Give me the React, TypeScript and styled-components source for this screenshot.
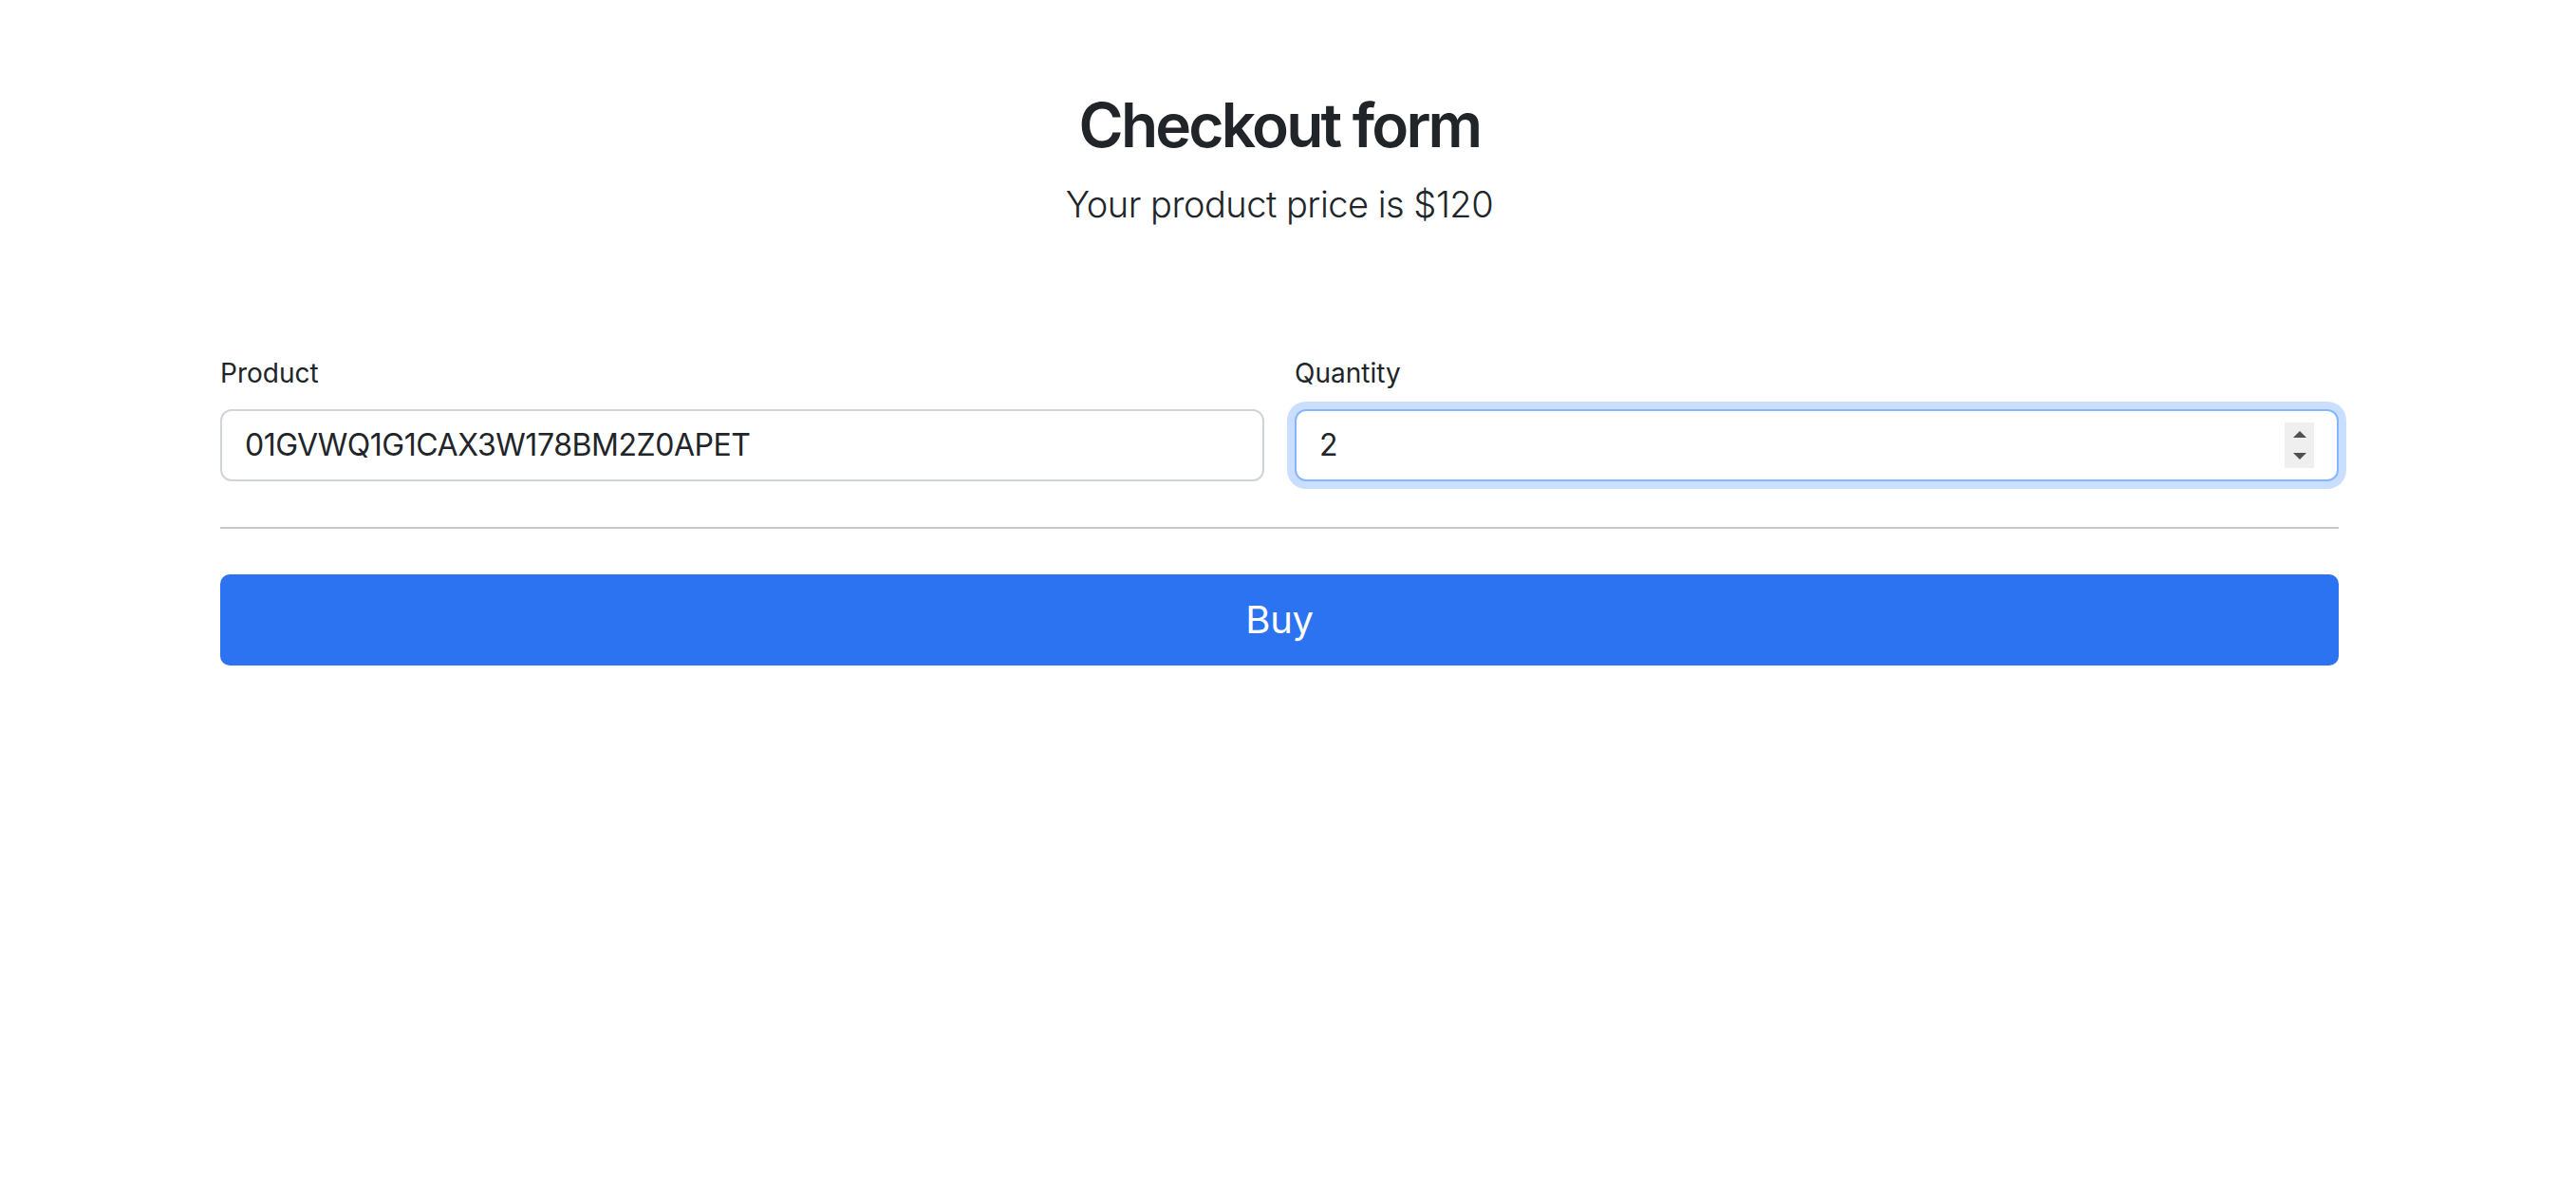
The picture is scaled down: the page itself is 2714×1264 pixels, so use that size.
import React from "react";
import styled, { createGlobalStyle } from "styled-components";

const GlobalStyle = createGlobalStyle`
  html, body {
    margin: 0;
    padding: 0;
    background: #ffffff;
  }
  body {
    font-family: Inter, "Noto Sans", "Liberation Sans", sans-serif;
    color: #212529;
    -webkit-font-smoothing: antialiased;
  }
  * { box-sizing: border-box; }
`;

const Page = styled.main`
  padding-right: 18px;
`;

const Container = styled.div`
  width: 2232px;
  margin: 0 auto;
`;

const Header = styled.header`
  text-align: center;
  padding: 94px 0 96px;
`;

const Title = styled.h2`
  margin: 0 0 16px;
  font-size: 64px;
  font-weight: 600;
  line-height: 1.2;
  letter-spacing: -2.8px;
  color: #212529;
`;

const Lead = styled.p`
  margin: 0 0 32px;
  font-size: 38px;
  font-weight: 300;
  line-height: 1.5;
  letter-spacing: -0.5px;
  color: #212529;
`;

const Form = styled.form`
  display: flex;
  flex-direction: column;
`;

const Row = styled.div`
  display: grid;
  grid-template-columns: 1fr 1fr;
  column-gap: 32px;
`;

const Field = styled.div`
  display: flex;
  flex-direction: column;
`;

const Label = styled.label`
  font-size: 28px;
  line-height: 1.5;
  margin-bottom: 17px;
  color: #212529;
`;

const InputWrap = styled.div`
  position: relative;
`;

const Input = styled.input<{ $focused?: boolean }>`
  display: block;
  width: 100%;
  height: 76px;
  padding: 12px 24px;
  font-family: inherit;
  font-size: 32px;
  line-height: 1.5;
  letter-spacing: -0.45px;
  color: #212529;
  background: #fff;
  border: 2px solid ${(p) => (p.$focused ? "#86b7fe" : "#ced4da")};
  border-radius: 12px;
  outline: none;
  box-shadow: ${(p) => (p.$focused ? "0 0 0 8px rgba(13, 110, 253, 0.22)" : "none")};
  -moz-appearance: textfield;
  &::-webkit-inner-spin-button,
  &::-webkit-outer-spin-button {
    -webkit-appearance: none;
    margin: 0;
  }
`;

const Spinner = styled.div`
  position: absolute;
  right: 26px;
  top: 14px;
  width: 31px;
  height: 48px;
  background: #efefef;
  display: flex;
  flex-direction: column;
  align-items: center;
  justify-content: center;
  gap: 16px;
  pointer-events: none;
`;

const Arrow = styled.span<{ $down?: boolean }>`
  width: 0;
  height: 0;
  border-left: 7px solid transparent;
  border-right: 7px solid transparent;
  ${(p) =>
    p.$down
      ? "border-top: 7px solid #505050;"
      : "border-bottom: 7px solid #505050;"}
`;

const Divider = styled.hr`
  margin: 48px 0;
  border: 0;
  border-top: 2px solid #c8c9ca;
`;

const BuyButton = styled.button`
  width: 100%;
  height: 96px;
  border: 0;
  border-radius: 10px;
  background: #2c73f2;
  color: #fff;
  font-family: inherit;
  font-size: 40px;
  line-height: 1.5;
  letter-spacing: -0.3px;
  cursor: pointer;
`;

export default function App() {
  return (
    <>
      <GlobalStyle />
      <Page>
        <Container>
          <Header>
            <Title>Checkout form</Title>
            <Lead>Your product price is $120</Lead>
          </Header>
          <Form onSubmit={(e) => e.preventDefault()}>
            <Row>
              <Field>
                <Label htmlFor="product">Product</Label>
                <Input id="product" type="text" defaultValue="01GVWQ1G1CAX3W178BM2Z0APET" />
              </Field>
              <Field>
                <Label htmlFor="quantity">Quantity</Label>
                <InputWrap>
                  <Input id="quantity" type="number" defaultValue={2} $focused />
                  <Spinner>
                    <Arrow />
                    <Arrow $down />
                  </Spinner>
                </InputWrap>
              </Field>
            </Row>
            <Divider />
            <BuyButton type="submit">Buy</BuyButton>
          </Form>
        </Container>
      </Page>
    </>
  );
}
